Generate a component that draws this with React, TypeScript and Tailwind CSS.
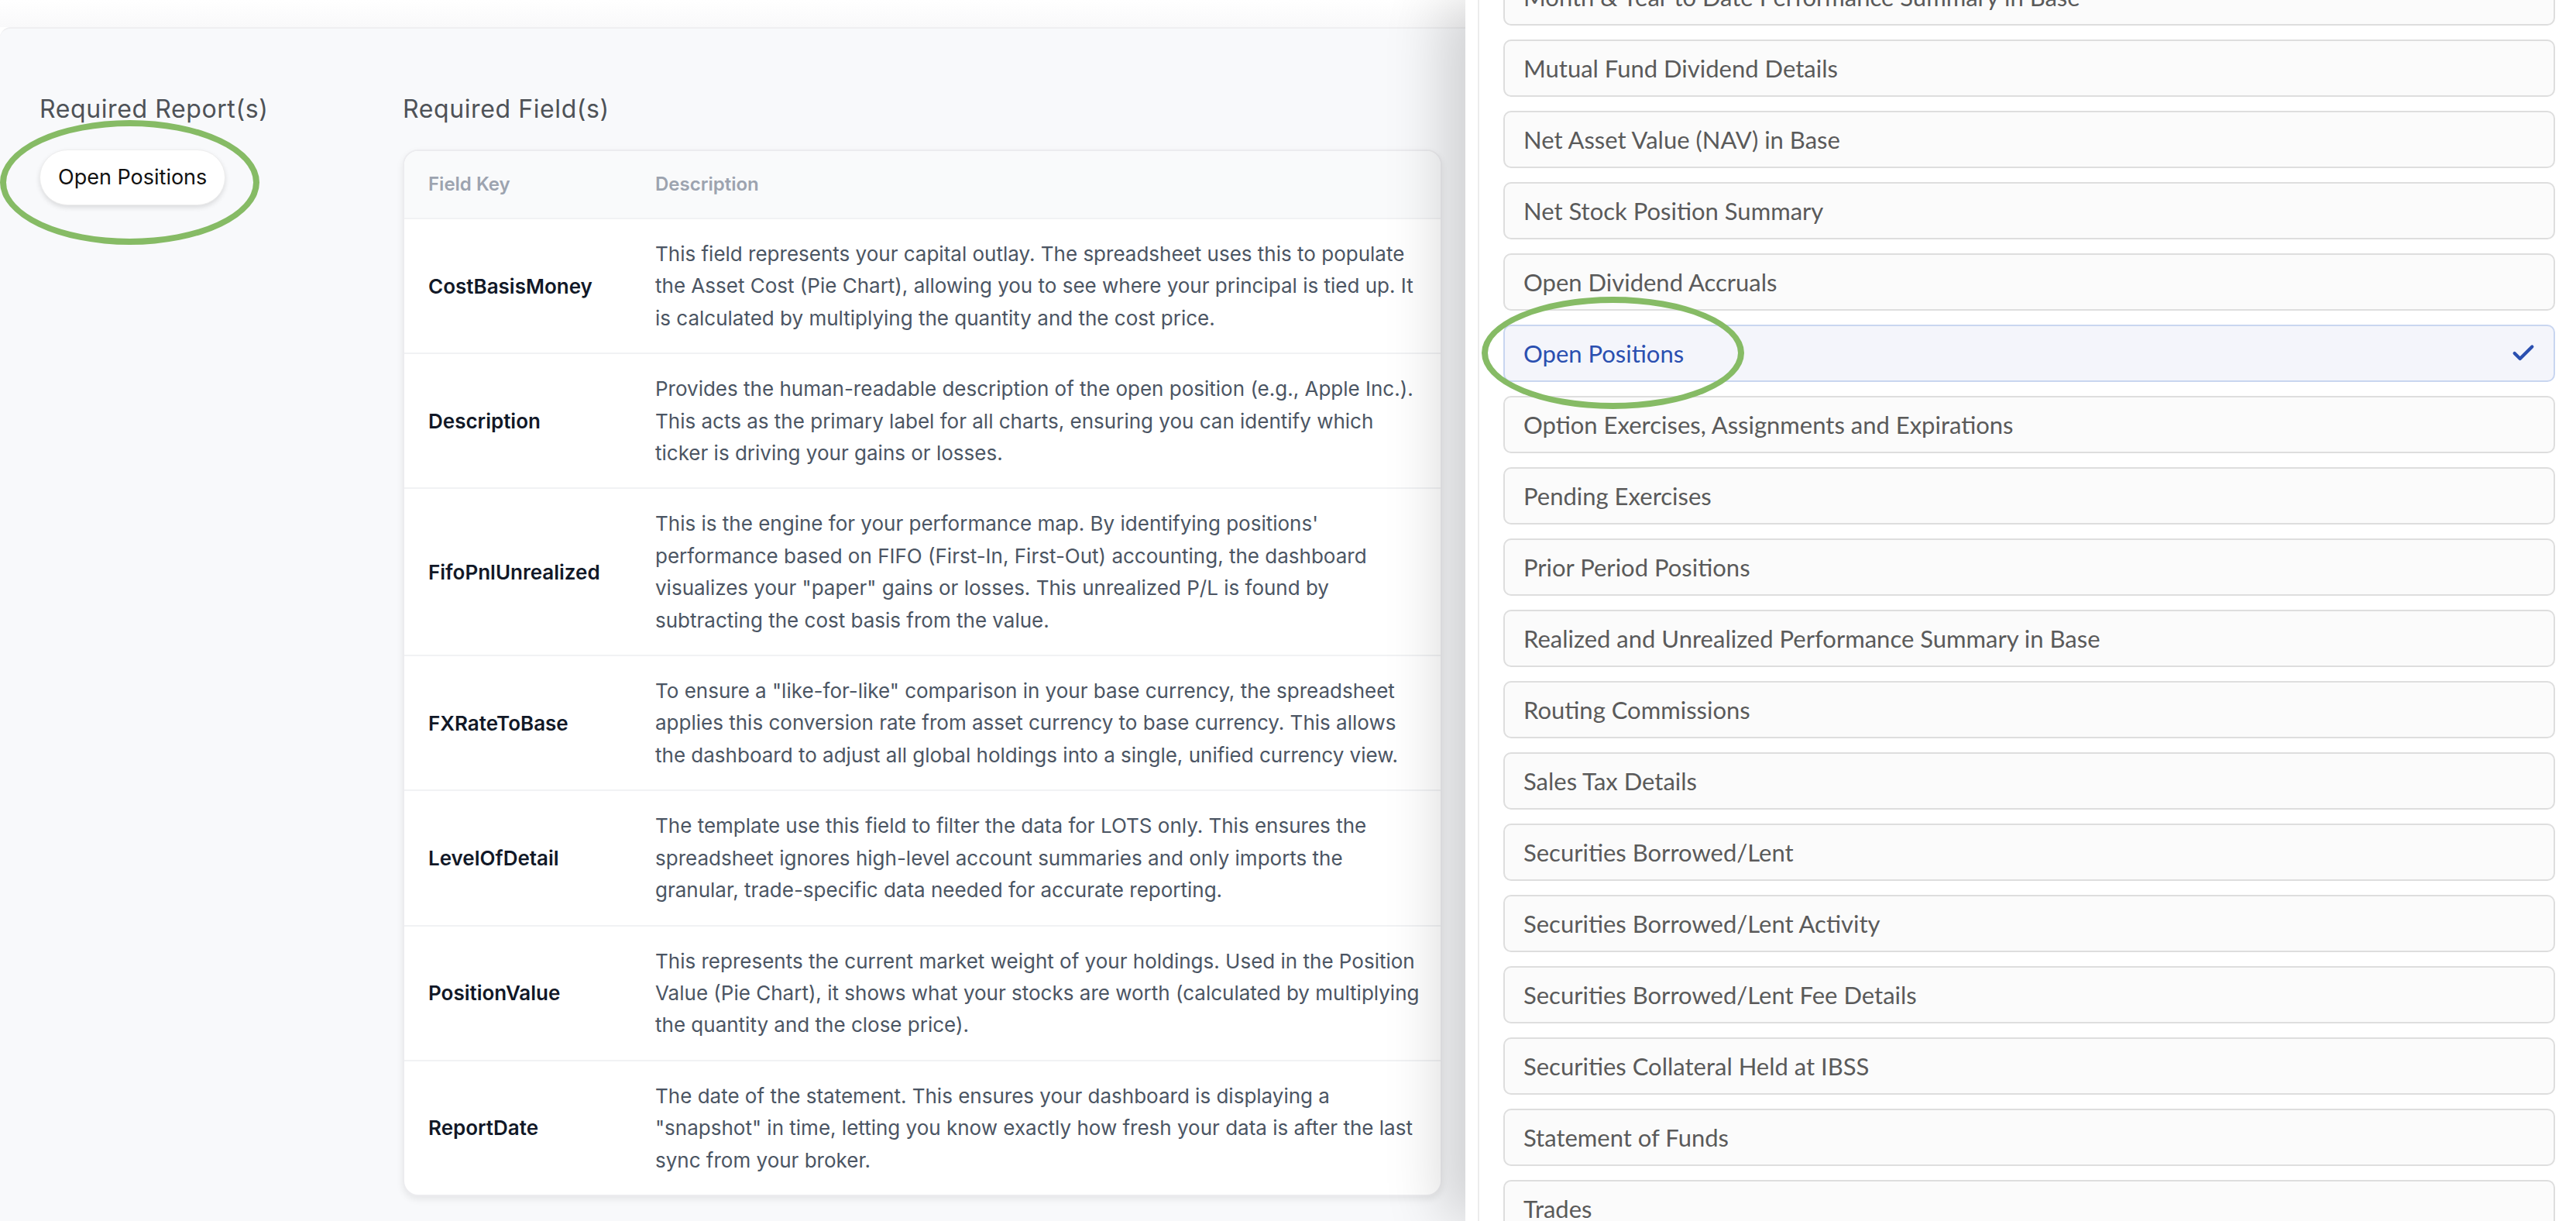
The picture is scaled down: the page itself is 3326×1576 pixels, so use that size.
import { Check } from 'lucide-react'

const fields = [
  {
    key: 'CostBasisMoney',
    text: 'This field represents your capital outlay. The spreadsheet uses this to populate the Asset Cost (Pie Chart), allowing you to see where your principal is tied up. It is calculated by multiplying the quantity and the cost price.',
  },
  {
    key: 'Description',
    text: 'Provides the human-readable description of the open position (e.g., Apple Inc.). This acts as the primary label for all charts, ensuring you can identify which ticker is driving your gains or losses.',
  },
  {
    key: 'FifoPnlUnrealized',
    text: 'This is the engine for your performance map. By identifying positions\' performance based on FIFO (First-In, First-Out) accounting, the dashboard visualizes your "paper" gains or losses. This unrealized P/L is found by subtracting the cost basis from the value.',
  },
  {
    key: 'FXRateToBase',
    text: 'To ensure a "like-for-like" comparison in your base currency, the spreadsheet applies this conversion rate from asset currency to base currency. This allows the dashboard to adjust all global holdings into a single, unified currency view.',
  },
  {
    key: 'LevelOfDetail',
    text: 'The template use this field to filter the data for LOTS only. This ensures the spreadsheet ignores high-level account summaries and only imports the granular, trade-specific data needed for accurate reporting.',
  },
  {
    key: 'PositionValue',
    text: 'This represents the current market weight of your holdings. Used in the Position Value (Pie Chart), it shows what your stocks are worth (calculated by multiplying the quantity and the close price).',
  },
  {
    key: 'ReportDate',
    text: 'The date of the statement. This ensures your dashboard is displaying a "snapshot" in time, letting you know exactly how fresh your data is after the last sync from your broker.',
  },
]

const reports = [
  'Month & Year to Date Performance Summary in Base',
  'Mutual Fund Dividend Details',
  'Net Asset Value (NAV) in Base',
  'Net Stock Position Summary',
  'Open Dividend Accruals',
  'Open Positions',
  'Option Exercises, Assignments and Expirations',
  'Pending Exercises',
  'Prior Period Positions',
  'Realized and Unrealized Performance Summary in Base',
  'Routing Commissions',
  'Sales Tax Details',
  'Securities Borrowed/Lent',
  'Securities Borrowed/Lent Activity',
  'Securities Borrowed/Lent Fee Details',
  'Securities Collateral Held at IBSS',
  'Statement of Funds',
  'Trades',
]

export default function App() {
  return (
    <div className="flex h-[1576px] w-[3326px] overflow-hidden bg-white font-['Inter',sans-serif]">
      <div className="relative flex min-w-0 flex-1 flex-col">
        <div className="h-[35px] shrink-0 bg-gradient-to-b from-white to-[#f9f9fa]" />
        <div className="flex flex-1 rounded-tl-[14px] border-t-2 border-[#efeff1] bg-[#f8f9fb] pt-[84px]">
          <div className="w-[520px] shrink-0 pl-[51px]">
            <h3 className="text-[32px] leading-[40px] tracking-[0.6px] text-[#4e5257]">Required Report(s)</h3>
            <div className="mt-[32px] flex">
              <span className="flex h-[72px] items-center rounded-full border border-[#eeeeee] bg-white px-[23px] text-[27px] text-[#111111] shadow-[0_3px_6px_rgba(0,0,0,0.12)]">
                Open Positions
              </span>
            </div>
          </div>
          <div className="w-[1342px] shrink-0">
            <h3 className="text-[32px] leading-[40px] tracking-[0.6px] text-[#4e5257]">Required Field(s)</h3>
            <div className="mt-[32px] overflow-hidden rounded-[20px] border-2 border-[#ececef] bg-white shadow-[0_4px_10px_rgba(0,0,0,0.08)]">
              <div className="grid h-[86px] grid-cols-[293px_1fr] items-center bg-[#f9fafb] px-[31px] text-[24px] font-semibold text-[#9ca3af]">
                <span>Field Key</span>
                <span>Description</span>
              </div>
              {fields.map((f) => (
                <div
                  key={f.key}
                  className="grid grid-cols-[293px_1fr] items-center border-t-2 border-[#f1f2f4] py-[24px] pl-[31px] pr-[24px]"
                >
                  <span className="text-[26px] font-semibold text-[#111827]">{f.key}</span>
                  <p className="text-[26px] leading-[41.4px] text-[#4b5563]">{f.text}</p>
                </div>
              ))}
            </div>
          </div>
        </div>
        <div className="absolute left-0 top-[155px] h-[161px] w-[335px] rounded-[50%] border-[8px] border-[#86bb65]" />
      </div>

      <div className="relative z-10 flex w-[1434px] shrink-0 bg-white pl-[16px] shadow-[-30px_0_70px_rgba(0,0,0,0.16)]">
        <div className="flex-1 border-l-2 border-[#ececec] pl-[31px] pr-[27px]">
          <div className="-mt-[41px] flex flex-col gap-[18px] font-['Lato',sans-serif]">
            {reports.map((r) => {
              const sel = r === 'Open Positions'
              return (
                <div
                  key={r}
                  className={
                    sel
                      ? 'flex h-[74px] shrink-0 items-center justify-between rounded-[10px] border-2 border-[#c9d6f0] bg-[#f4f5fb] pl-[24px] pr-[22px] text-[31px] text-[#2a4fb0]'
                      : 'flex h-[74px] shrink-0 items-center rounded-[10px] border-2 border-[#dedede] bg-[#fbfbfb] pl-[24px] text-[31px] text-[#5a5a5a]'
                  }
                >
                  <span>{r}</span>
                  {sel && <Check size={34} strokeWidth={3} color="#2a4fb0" />}
                </div>
              )
            })}
          </div>
        </div>
        <div className="absolute left-[21px] top-[383px] h-[145px] w-[339px] rounded-[50%] border-[8px] border-[#86bb65]" />
      </div>
    </div>
  )
}
